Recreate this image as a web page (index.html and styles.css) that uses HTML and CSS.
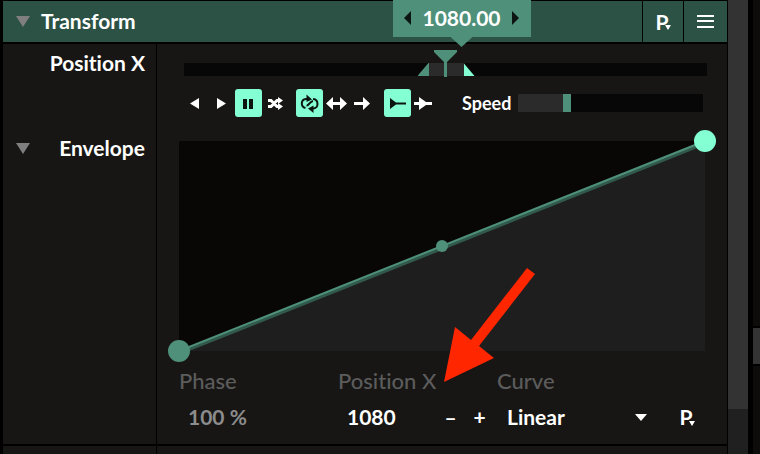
FILE: index.html
```html
<!DOCTYPE html>
<html lang="en">
<head>
    <meta charset="UTF-8">
    <meta name="viewport" content="width=device-width, initial-scale=1.0">
    <title>Transform</title>
    <link rel="stylesheet" href="styles.css">
</head>
<body>
    <main class="panel">
        <header class="panel-header">
            <button class="title-button">
                <svg class="fold" width="14" height="12" viewBox="0 0 14 12"><path d="M0 0H14L7 11Z"/></svg>
                <span>Transform</span>
            </button>
            <button class="header-button preset" aria-label="Presets">P<svg width="6" height="5" viewBox="0 0 6 5"><path d="M0 0H6L3 5Z"/></svg></button>
            <button class="header-button menu-button" aria-label="Menu">
                <svg width="17" height="15" viewBox="0 0 17 15"><path d="M0 1H17V3H0ZM0 6H17V8H0ZM0 12H17V14H0Z"/></svg>
            </button>
        </header>

        <section class="row">
            <div class="row-label"><label for="position">Position X</label></div>
            <div class="row-content">
                <div class="timeline">
                    <div class="range"></div>
                    <input type="range" id="position" min="0" max="2160" value="1080">
                    <div class="value-popup">
                        <button aria-label="Decrease"><svg width="7" height="14" viewBox="0 0 7 14"><path d="M7 0V14L0 7Z"/></svg></button>
                        <output for="position">1080.00</output>
                        <button aria-label="Increase"><svg width="7" height="14" viewBox="0 0 7 14"><path d="M0 0V14L7 7Z"/></svg></button>
                    </div>
                </div>
                <div class="transport">
                    <div class="group">
                        <button aria-label="Play backwards"><svg viewBox="0 0 27 28"><path d="M18 9V20L9 14.500Z"/></svg></button>
                        <button aria-label="Play"><svg viewBox="0 0 27 28"><path d="M9 9V20L18 14.500Z"/></svg></button>
                        <button class="active" aria-label="Pause"><svg viewBox="0 0 27 28"><path d="M8 10H12V20H8ZM14 10H18V20H14Z"/></svg></button>
                        <button aria-label="Random"><svg viewBox="0 0 27 28"><path class="stroke thick" d="M6 11.500H9L15 17.500H17M6 17.500H9L15 11.500H17"/><path d="M16 8L21 11.500L16 15ZM16 14L21 17.500L16 21Z"/></svg></button>
                    </div>
                    <div class="group">
                        <button class="active" aria-label="Loop"><svg viewBox="0 0 27 28"><path class="stroke" d="M9.500 19C4.500 18 4.500 10.500 10 10H12M10.500 16.500C13 17 13.500 12.500 17 12M17 10C23 10.500 23 19.500 17 19.500H15"/><path d="M10.500 5.500L16 10.500L10.500 13ZM17.500 16.500V24L12 19.500Z"/></svg></button>
                        <button aria-label="Bounce"><svg viewBox="0 0 27 28"><path d="M3 14.500L10 8V13H17V8L24 14.500L17 21V16H10V21Z"/></svg></button>
                        <button aria-label="Play once"><svg viewBox="0 0 27 28"><path d="M4 13H13V8L20 14.500L13 21V16H4Z"/></svg></button>
                    </div>
                    <div class="group">
                        <button class="active" aria-label="Start from beginning"><svg viewBox="0 0 27 28"><path d="M6 9L12 13.500H22V15.500H12L6 20Z"/></svg></button>
                        <button aria-label="Continue"><svg viewBox="0 0 27 28"><path d="M3 13H8V8L15 13H21V16H15L8 21V16H3Z"/></svg></button>
                    </div>
                    <label for="speed">Speed</label>
                    <input type="range" id="speed" min="0" max="4" step="any" value="1">
                </div>
            </div>
        </section>

        <section class="row envelope-row">
            <div class="row-label">
                <button class="fold-button" aria-label="Fold envelope">
                    <svg class="fold" width="14" height="12" viewBox="0 0 14 12"><path d="M0 0H14L7 11Z"/></svg>
                </button>
                <span>Envelope</span>
            </div>
            <div class="row-content">
                <div class="envelope">
                    <svg class="graph" viewBox="0 0 526 210">
                        <rect class="graph-back" width="526" height="210"/>
                        <path class="graph-area" d="M0 210L526 0V210Z"/>
                        <path class="graph-shadow" d="M0 212L526 2"/>
                        <path class="graph-line" d="M0 210L526 0"/>
                        <circle class="point" cx="0" cy="210" r="11"/>
                        <circle class="point" cx="263" cy="105" r="6"/>
                        <circle class="point selected" cx="526" cy="0" r="11"/>
                    </svg>
                    <svg class="arrow" width="91" height="114" viewBox="0 0 91 114"><path d="M0 114L11 59L27 72L83 0L91 6L35 78L50 90Z"/></svg>
                </div>
                <div class="fields">
                    <label for="phase">Phase</label>
                    <label for="value">Position X</label>
                    <label for="curve">Curve</label>
                    <input type="text" id="phase" value="100 %">
                    <div class="stepper">
                        <input type="text" id="value" value="1080">
                        <button>–</button>
                        <button>+</button>
                    </div>
                    <div class="curve">
                        <div class="select">
                            <select id="curve">
                                <option>Linear</option>
                            </select>
                            <svg width="12" height="7" viewBox="0 0 12 7"><path d="M0 0H12L6 7Z"/></svg>
                        </div>
                        <button class="preset-button preset" aria-label="Envelope presets">P<svg width="6" height="5" viewBox="0 0 6 5"><path d="M0 0H6L3 5Z"/></svg></button>
                    </div>
                </div>
            </div>
        </section>

        <section class="row next-row">
            <div class="row-label"></div>
            <div class="row-content"></div>
        </section>
    </main>
    <div class="scrollbar"><div class="thumb"></div></div>
    <div class="side"><div class="splitter"></div></div>
</body>
</html>
```

FILE: styles.css
```css
* {
    box-sizing: border-box;
}

body {
    margin: 0;
    height: 100vh;
    overflow: hidden;
    display: flex;
    background: #000;
    color: #fff;
    font-family: Lato, 'Noto Sans', sans-serif;
    font-size: 21px;
    font-weight: 700;
    font-variant-ligatures: none;
    line-height: 30px;
}

button,
input,
select {
    margin: 0;
    padding: 0;
    border: none;
    background: none;
    color: inherit;
    font: inherit;
}

button {
    display: flex;
    align-items: center;
    justify-content: center;
    cursor: pointer;
}

svg {
    display: block;
    fill: currentColor;
}

.stroke {
    fill: none;
    stroke: currentColor;
    stroke-width: 2;
}

.thick {
    stroke-width: 3;
}

.preset svg {
    margin: 12px 0 0 -4px;
}

/* panel */

.panel {
    flex: 1;
    min-width: 0;
    display: flex;
    flex-direction: column;
    padding: 1px 1px 0 3px;
}

.panel-header {
    flex: none;
    display: flex;
    gap: 1px;
    height: 41px;
    margin-bottom: 2px;
}

.title-button,
.header-button {
    background: #2b5245;
}

.title-button {
    flex: 1;
    justify-content: flex-start;
    gap: 11px;
    padding: 0 0 2px 13px;
}

.header-button {
    width: 40px;
}

.menu-button {
    width: 43px;
}

.fold {
    fill: #7f7f7f;
}

.title-button .fold {
    margin-top: 2px;
}

.row {
    display: flex;
    gap: 1px;
}

.row-label,
.row-content {
    background: #171614;
}

.row-label {
    width: 153px;
    display: flex;
    align-items: flex-start;
    justify-content: flex-end;
    padding: 4px 11px 0 13px;
}

.row-content {
    flex: 1;
    min-width: 0;
    padding: 19px 20px 13px 27px;
}

.envelope-row .row-label {
    justify-content: space-between;
    padding-top: 3px;
}

.envelope-row .row-content {
    padding: 11px 22px 12px;
}

.next-row {
    flex: 1;
    margin-top: 2px;
    overflow: hidden;
}

.next-row .row-label,
.next-row .row-content {
    padding-top: 0;
    padding-bottom: 0;
}

.fold-button {
    height: 32px;
}

/* position slider */

.timeline {
    position: relative;
    height: 13px;
    margin-bottom: 13px;
    background: #070707;
}

.range {
    position: absolute;
    left: 50%;
    top: 0;
    width: 57px;
    height: 13px;
    margin-left: -28px;
    background: #2b2b2b;
    clip-path: polygon(0 100%, 11px 0, 46px 0, 100% 100%);
}

.range::before,
.range::after {
    content: '';
    position: absolute;
    top: 0;
    width: 11px;
    height: 13px;
}

.range::before {
    left: 0;
    background: #4f907a;
}

.range::after {
    right: 0;
    background: #84ffd4;
}

input[type="range"] {
    appearance: none;
    cursor: pointer;
}

#position {
    position: absolute;
    left: 0;
    bottom: -1px;
    width: 100%;
    height: 27px;
}

#position::-webkit-slider-thumb {
    appearance: none;
    width: 23px;
    height: 27px;
    background: #4f907a;
    clip-path: polygon(0 0, 100% 0, 100% 2px, 13px 12px, 13px 100%, 10px 100%, 10px 12px, 0 2px);
}

.value-popup {
    position: absolute;
    left: 50%;
    bottom: 39px;
    width: 138px;
    height: 37px;
    margin-left: -53px;
    padding: 0 11px 2px;
    display: flex;
    align-items: center;
    justify-content: space-between;
    background: #4f907a;
}

.value-popup::after {
    content: '';
    position: absolute;
    left: 58px;
    top: 37px;
    width: 22px;
    height: 10px;
    background: #4f907a;
    clip-path: polygon(0 0, 100% 0, 50% 100%);
}

.value-popup svg {
    fill: #0c1512;
}

/* transport */

.transport {
    display: flex;
    align-items: center;
    height: 28px;
    margin: 0 4px 0 -3px;
}

.group {
    display: flex;
    margin-right: 7px;
}

.group button {
    width: 27px;
    height: 28px;
    border-radius: 3px;
}

.group svg {
    width: 27px;
    height: 28px;
}

.group .active {
    background: #84ffd4;
    color: #0c1512;
}

.transport label {
    margin: 0 7px 0 17px;
    font-size: 18px;
}

#speed {
    flex: 1;
    min-width: 0;
    height: 18px;
    background: linear-gradient(90deg, #2b2b2b 26%, #070707 26%);
}

#speed::-webkit-slider-thumb {
    appearance: none;
    width: 8px;
    height: 18px;
    background: #4f907a;
}

/* envelope */

.envelope {
    position: relative;
}

.graph {
    width: 100%;
    overflow: visible;
}

.graph-back {
    fill: #080706;
}

.graph-area {
    fill: #1e1e1e;
}

.graph-shadow,
.graph-line {
    fill: none;
    stroke: #315a4d;
    stroke-width: 4;
}

.graph-line {
    stroke: #4f907a;
    stroke-width: 2;
}

.point {
    fill: #4f907a;
}

.point.selected {
    fill: #84ffd4;
}

.arrow {
    position: absolute;
    left: 50%;
    bottom: -31px;
    margin-left: 2px;
    fill: #ff2600;
    pointer-events: none;
}

.fields {
    display: grid;
    grid-template-columns: 159px 159px 1fr;
    row-gap: 6px;
    margin-top: 15px;
}

.fields > label {
    color: #5c5c5c;
    font-size: 22px;
    font-weight: 500;
}

.fields input {
    width: 100%;
    min-width: 0;
    height: 30px;
    padding-left: 9px;
}

#phase {
    color: #8c8c8c;
}

.stepper,
.curve {
    display: flex;
}

.stepper button {
    flex: none;
    width: 29px;
    height: 30px;
}

.stepper {
    padding-right: 3px;
}

.curve {
    justify-content: space-between;
}

.select {
    position: relative;
    flex: 1;
}

.select select {
    appearance: none;
    width: 100%;
    height: 30px;
    padding-left: 10px;
}

.select svg {
    position: absolute;
    right: 22px;
    top: 12px;
    pointer-events: none;
}

.preset-button {
    width: 36px;
    height: 30px;
}

/* right edge */

.scrollbar {
    width: 20px;
    background: #202020;
}

.thumb {
    height: 90%;
    background: #333;
}

.side {
    width: 7px;
    margin-left: 5px;
    background: #0d0c0b;
    display: flex;
    flex-direction: column;
    justify-content: center;
    padding-top: 238px;
}

.splitter {
    height: 36px;
    background: #333;
    outline: 2px solid #000;
}
```
